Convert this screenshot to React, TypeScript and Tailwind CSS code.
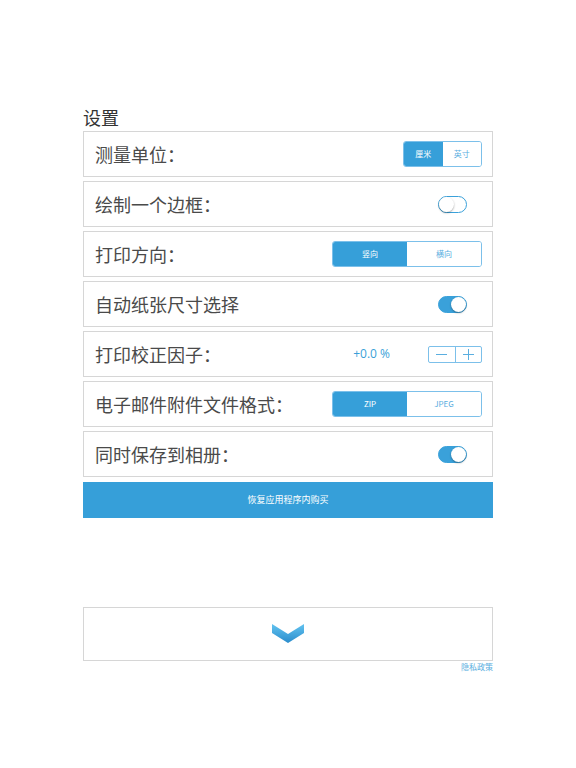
import { ReactNode } from 'react';

const FONT = '"Noto Sans CJK SC", "Noto Sans", sans-serif';

function Row({ label, children }: { label: string; children?: ReactNode }) {
  return (
    <div className="flex h-[46px] items-center justify-between border border-[#d6d6d6] bg-white pl-[11px] pr-[10px]">
      <span className="text-[18px] leading-none text-[#4a4a4a]">{label}</span>
      {children}
    </div>
  );
}

function Segmented({ items, width, active = 0 }: { items: string[]; width: string; active?: number }) {
  return (
    <div className={`flex h-[26px] overflow-hidden rounded-[3px] border border-[#7cc0ea] ${width}`}>
      {items.map((it, i) => (
        <div
          key={it}
          className={`flex flex-1 items-center justify-center text-[8px] ${
            i === active ? 'bg-[#369fd9] text-white' : 'bg-white text-[#5aaee0]'
          }`}
        >
          {it}
        </div>
      ))}
    </div>
  );
}

function Toggle({ on }: { on: boolean }) {
  return (
    <div
      className={`mr-[15px] flex h-[17px] w-[29px] items-center rounded-full border-[1.5px] border-[#3aa1da] ${
        on ? 'justify-end bg-[#3aa1da]' : 'justify-start bg-white'
      }`}
    >
      <div className="h-[15px] w-[15px] rounded-full bg-white shadow-[0_1px_2px_rgba(0,0,0,0.35)]" />
    </div>
  );
}

export default function App() {
  return (
    <div className="min-h-[768px] bg-white" style={{ fontFamily: FONT }}>
      <div className="mx-auto w-[410px] pt-[105px]">
        <h1 className="mb-[2px] text-[18px] leading-[24px] text-[#333]">设置</h1>
        <div className="flex flex-col gap-[4px]">
          <Row label="测量单位：">
            <Segmented items={['厘米', '英寸']} width="w-[79px]" />
          </Row>
          <Row label="绘制一个边框：">
            <Toggle on={false} />
          </Row>
          <Row label="打印方向：">
            <Segmented items={['竖向', '横向']} width="w-[150px]" />
          </Row>
          <Row label="自动纸张尺寸选择">
            <Toggle on />
          </Row>
          <Row label="打印校正因子：">
            <div className="flex items-center">
              <span className="mr-[38px] text-[12px] text-[#3a9fd8]" style={{ fontFamily: '"Open Sans", sans-serif' }}>
                +0.0 %
              </span>
              <div className="flex h-[17px] w-[54px] rounded-[2px] border border-[#7cc0ea]">
                <div className="flex flex-1 items-center justify-center border-r border-[#7cc0ea]">
                  <div className="h-px w-[11px] bg-[#5aaee0]" />
                </div>
                <div className="relative flex flex-1 items-center justify-center">
                  <div className="h-px w-[11px] bg-[#5aaee0]" />
                  <div className="absolute h-[11px] w-px bg-[#5aaee0]" />
                </div>
              </div>
            </div>
          </Row>
          <Row label="电子邮件附件文件格式：">
            <Segmented items={['ZIP', 'JPEG']} width="w-[150px]" />
          </Row>
          <Row label="同时保存到相册：">
            <Toggle on />
          </Row>
          <button className="mt-[1px] flex h-[36px] items-center justify-center bg-[#369fd9] text-[9px] text-white">
            恢复应用程序内购买
          </button>
        </div>

        <div className="mt-[89px] flex h-[54px] items-center justify-center border border-[#d6d6d6] bg-white">
          <svg width="32" height="20" viewBox="0 0 32 20">
            <defs>
              <linearGradient id="chev" x1="0" y1="0" x2="0" y2="1">
                <stop offset="0" stopColor="#62c3f0" />
                <stop offset="1" stopColor="#2a8ccc" />
              </linearGradient>
            </defs>
            <polygon points="0,0 16,10 32,0 32,9 16,19 0,9" fill="url(#chev)" />
          </svg>
        </div>
        <div className="text-right text-[8px] leading-[12px] text-[#5aaee0]">隐私政策</div>
      </div>
    </div>
  );
}
